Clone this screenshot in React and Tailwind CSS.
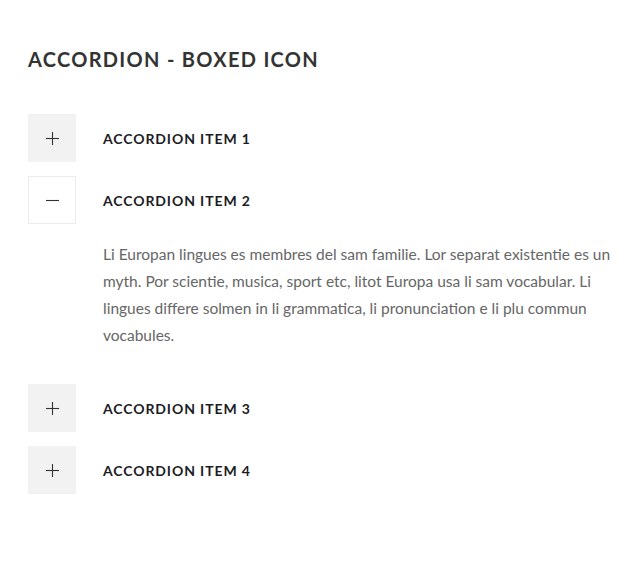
import { useState } from "react";

const items = [
  { id: 1, title: "Accordion Item 1" },
  { id: 2, title: "Accordion Item 2" },
  { id: 3, title: "Accordion Item 3" },
  { id: 4, title: "Accordion Item 4" },
];

const body =
  "Li Europan lingues es membres del sam familie. Lor separat existentie es un myth. Por scientie, musica, sport etc, litot Europa usa li sam vocabular. Li lingues differe solmen in li grammatica, li pronunciation e li plu commun vocabules.";

function PlusMinus({ open }) {
  return (
    <svg width="13" height="13" viewBox="0 0 13 13" fill="none" stroke="#333" strokeWidth="1.1">
      <path d="M0 6.5h13" />
      {!open && <path d="M6.5 0v13" />}
    </svg>
  );
}

export default function App() {
  const [openId, setOpenId] = useState(2);

  return (
    <div className="min-h-screen bg-white pl-[28px] pr-[12px] pt-[47px]" style={{ fontFamily: "Lato, 'Noto Sans', sans-serif" }}>
      <h2 className="text-[20px] font-bold uppercase tracking-[1.3px] text-[#333] leading-[24px]">
        Accordion - Boxed Icon
      </h2>

      <div className="mt-[43px] flex flex-col">
        {items.map(item => {
          const open = openId === item.id;
          return (
            <div key={item.id} className="mb-[14px]">
              <button
                onClick={() => setOpenId(open ? null : item.id)}
                className="flex items-center gap-[27px] text-left"
              >
                <span
                  className={`flex h-[48px] w-[48px] items-center justify-center ${
                    open ? "border border-[#ececec] bg-white" : "bg-[#f2f2f2]"
                  }`}
                >
                  <PlusMinus open={open} />
                </span>
                <span className="pt-[1px] text-[14px] font-bold uppercase tracking-[0.9px] text-[#1c1c24]">
                  {item.title}
                </span>
              </button>
              {open && (
                <p className="ml-[75px] mt-[17px] mb-[21px] text-[15.5px] leading-[27px] text-[#666]">
                  {body}
                </p>
              )}
            </div>
          );
        })}
      </div>
    </div>
  );
}
